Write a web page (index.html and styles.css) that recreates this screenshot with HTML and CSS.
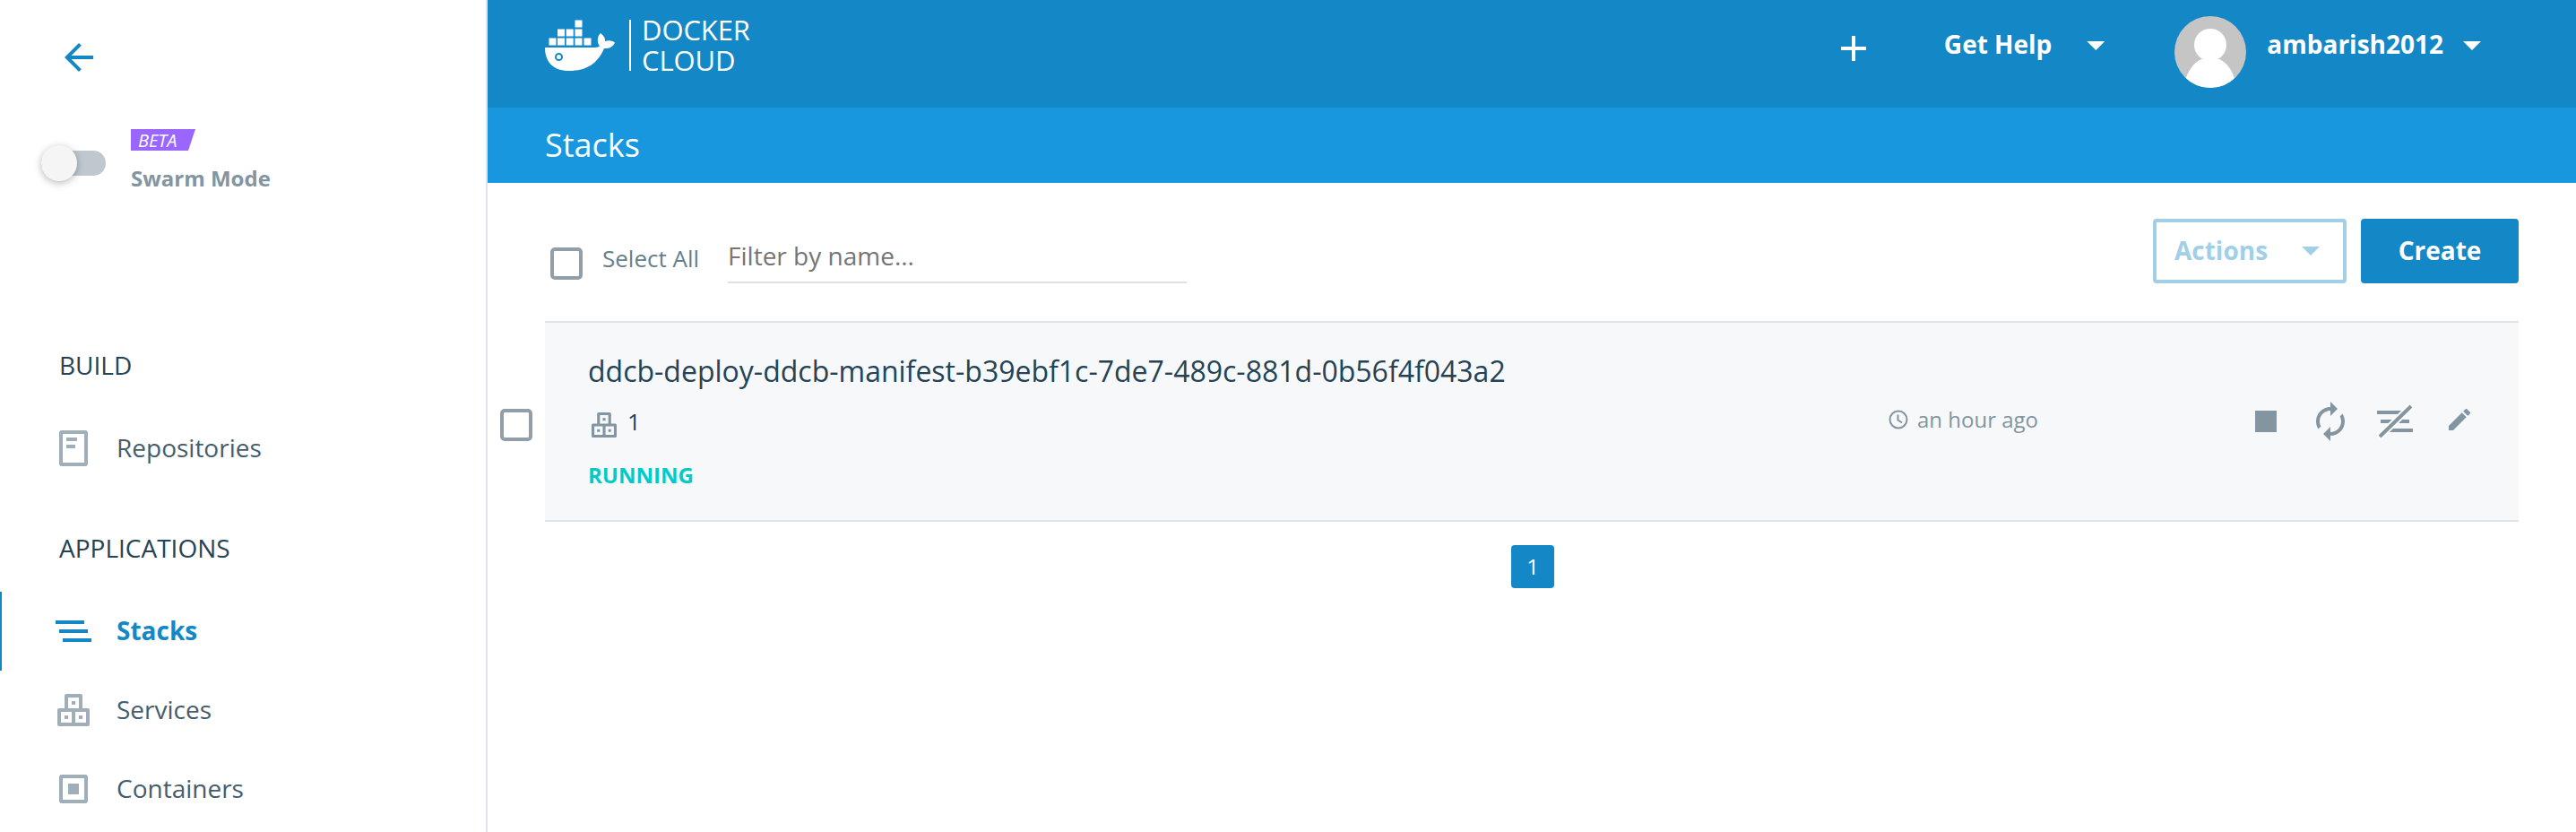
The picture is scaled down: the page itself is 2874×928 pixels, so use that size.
FILE: index.html
```html
<!DOCTYPE html>
<html lang="en">
<head>
<meta charset="utf-8">
<title>Docker Cloud - Stacks</title>
<link rel="stylesheet" href="styles.css">
</head>
<body>
<svg class="defs" width="0" height="0">
  <symbol id="cubes" viewBox="0 0 36 36">
    <path fill-rule="evenodd" d="M8 16V2a2 2 0 0 1 2-2h16a2 2 0 0 1 2 2v14h6a2 2 0 0 1 2 2v16a2 2 0 0 1-2 2H2a2 2 0 0 1-2-2V18a2 2 0 0 1 2-2zM12 4v12h12V4zM4 20v12h12V20zM20 20v12h12V20zM16 8h4v4h-4zM8 24h4v4H8zM24 24h4v4h-4z"/>
  </symbol>
</svg>
<div class="app">
  <aside class="sidebar">
    <a class="back"><svg width="48" height="48" viewBox="0 0 24 24"><path d="M20 11H7.83l5.59-5.59L12 4l-8 8 8 8 1.41-1.41L7.83 13H20z"/></svg></a>
    <div class="swarm">
      <div class="toggle"><span class="knob"></span></div>
      <div class="swarm-label">
        <span class="beta">BETA</span>
        <span class="swarm-name">Swarm Mode</span>
      </div>
    </div>
    <nav class="nav">
      <h2 class="nav-title">BUILD</h2>
      <a class="nav-item"><svg width="40" height="40" viewBox="0 0 40 40"><path fill-rule="evenodd" d="M7 0h26a3 3 0 0 1 3 3v34a3 3 0 0 1-3 3H7a3 3 0 0 1-3-3V3a3 3 0 0 1 3-3zM8 4v32h24V4zM12 8h12v4H12zM12 16h10v4H12z"/></svg><span class="nav-text">Repositories</span></a>
      <h2 class="nav-title nav-title-apps">APPLICATIONS</h2>
      <a class="nav-item active"><svg width="40" height="40" viewBox="0 0 40 40"><path d="M0 8h32v4H0zM4 18h32v4H4zM8 28h32v4H8z"/></svg><span class="nav-text">Stacks</span></a>
      <a class="nav-item"><svg width="40" height="36" viewBox="0 0 36 36"><use href="#cubes"/></svg><span class="nav-text">Services</span></a>
      <a class="nav-item"><svg width="40" height="40" viewBox="0 0 40 40"><path fill-rule="evenodd" d="M7 4h26a3 3 0 0 1 3 3v26a3 3 0 0 1-3 3H7a3 3 0 0 1-3-3V7a3 3 0 0 1 3-3zM8 8v24h24V8zM14 14h12v12H14z"/></svg><span class="nav-text">Containers</span></a>
    </nav>
  </aside>
  <main class="main">
    <header class="topbar">
      <div class="logo">
        <svg width="78" height="58" viewBox="0 0 78 58">
          <path d="M33.500 0.500h8v8h-8zM14 10.500h8v8h-8zM23.700 10.500h8v8h-8zM33.500 10.500h8v8h-8zM4.500 20.500h8v8h-8zM14 20.500h8v8h-8zM23.700 20.500h8v8h-8zM33.500 20.500h8v8h-8zM43.500 20.500h8v8h-8z"/>
          <path d="M0 31H54C57 31 59.500 30.500 61 29.500C58 25 58 19 62 15C66 18 67.500 21 67 24C71 22.500 75 23 78 25.500C76 30.500 71 32.500 66 32C59 49 46 57 27 57C9 57 0 47 0 31Z"/>
          <circle class="whale-eye" cx="15.500" cy="41.500" r="3.500"/>
        </svg>
        <span class="logo-line"></span>
        <span class="logo-text">DOCKER<br>CLOUD</span>
      </div>
      <div class="top-actions">
        <svg class="plus" width="28" height="28" viewBox="0 0 28 28"><path d="M12 0h4v12h12v4H16v12h-4V16H0v-4h12z"/></svg>
        <span class="help">Get Help</span>
        <span class="caret"></span>
        <svg class="avatar" width="80" height="80" viewBox="0 0 80 80">
          <clipPath id="round"><circle cx="40" cy="40" r="40"/></clipPath>
          <g clip-path="url(#round)"><rect class="avatar-bg" width="80" height="80"/><ellipse cx="40" cy="32" rx="18" ry="18"/><path d="M30 48H50C59 52 65 61 67.500 72L60 80H20L12 72C15 61 21 52 30 48Z"/></g>
        </svg>
        <span class="user">ambarish2012</span>
        <span class="caret caret-user"></span>
      </div>
    </header>
    <div class="subbar"><h1 class="page-title">Stacks</h1></div>
    <section class="content">
      <div class="toolbar">
        <span class="checkbox"></span>
        <span class="select-all">Select All</span>
        <div class="filter">Filter by name...</div>
        <div class="btn btn-outline"><span class="btn-text">Actions</span><span class="caret"></span></div>
        <div class="btn btn-primary"><span class="btn-text">Create</span></div>
      </div>
      <div class="stack-row">
        <span class="checkbox"></span>
        <article class="card">
          <div class="info">
            <div class="stack-name">ddcb-deploy-ddcb-manifest-b39ebf1c-7de7-489c-881d-0b56f4f043a2</div>
            <div class="count"><svg width="28" height="28" viewBox="0 0 36 36"><use href="#cubes"/></svg><span class="count-num">1</span></div>
            <div class="status">RUNNING</div>
          </div>
          <div class="time"><svg width="22" height="22" viewBox="0 0 22 22"><circle cx="11" cy="11" r="9.500"/><path d="M10.500 5.500v6l4.500 3"/></svg><span class="ago">an hour ago</span></div>
          <div class="tools">
            <svg width="24" height="24" viewBox="0 0 24 24"><path d="M0 0h24v24H0z"/></svg>
            <svg class="tool-redeploy" width="32" height="44" viewBox="4 1 16 22"><path d="M12 6v3l4-4-4-4v3c-4.420 0-8 3.580-8 8 0 1.570.46 3.030 1.240 4.260L6.700 14.800c-.45-.83-.7-1.790-.7-2.800 0-3.310 2.690-6 6-6zm6.760 1.740L17.300 9.200c.44.840.7 1.790.7 2.800 0 3.310-2.690 6-6 6v-3l-4 4 4 4v-3c4.420 0 8-3.580 8-8 0-1.570-.46-3.030-1.240-4.260z"/></svg>
            <svg class="tool-stack" width="42" height="40" viewBox="0 0 42 40"><path d="M0 8h32v4H0zM4 18h32v4H4zM8 28h32v4H8z"/><path class="slash-gap" d="M2 38L39 2"/><path class="slash" d="M3 37L38 3"/></svg>
            <svg class="tool-edit" width="24" height="24" viewBox="3 3 18 18"><path d="M3 17.250V21h3.750L17.810 9.940l-3.750-3.750zM20.710 7.040a1 1 0 0 0 0-1.410l-2.340-2.340a1 1 0 0 0-1.410 0l-1.830 1.830 3.750 3.750z"/></svg>
          </div>
        </article>
      </div>
      <div class="pager"><span class="page">1</span></div>
    </section>
  </main>
</div>
</body>
</html>
```

FILE: styles.css
```css
* { box-sizing: border-box; }
body { margin: 0; background: #fff; color: #254356; font-family: "Open Sans", "Noto Sans", sans-serif; }
h1, h2 { margin: 0; font-weight: 400; }
svg { display: block; flex: none; fill: currentColor; }
span { white-space: nowrap; }
.defs { position: absolute; }
.app { display: flex; width: 2874px; height: 928px; overflow: hidden; }

.sidebar { flex: none; width: 544px; border-right: 2px solid #dfe3e8; }
.back { display: block; width: 48px; margin: 40px 0 0 64px; color: #1488c6; }
.swarm { display: flex; margin: 56px 0 0 46px; }
.toggle { width: 72px; height: 28px; margin: 24px 28px 0 0; border-radius: 14px; background: #bfc8ce; }
.knob { display: block; width: 40px; height: 40px; margin-top: -6px; border-radius: 50%; background: #f5f5f5; box-shadow: 0 2px 8px rgba(0, 0, 0, .28); }
.swarm-label { display: flex; flex-direction: column; align-items: flex-start; }
.beta { width: 72px; height: 24px; padding-left: 8px; background: #9a66ff; clip-path: polygon(0 0, 100% 0, 64px 100%, 0 100%); color: #fff; font-size: 20px; font-style: italic; line-height: 26px; }
.swarm-name { margin-top: 15px; color: #8295a0; font-size: 24px; font-weight: 700; line-height: 32px; }

.nav { margin-top: 173px; }
.nav-title { margin-bottom: 30px; padding-left: 66px; font-size: 28px; line-height: 38px; }
.nav-title-apps { margin-top: 48px; }
.nav-item { display: flex; align-items: center; gap: 28px; height: 88px; padding-left: 60px; border-left: 2px solid transparent; color: #a0afb7; font-size: 28px; line-height: 38px; }
.nav-text { padding-bottom: 2px; color: #445d6e; }
.active { border-left-color: #1488c6; color: #1488c6; font-weight: 700; }
.active .nav-text { color: #1488c6; }

.main { flex: 1; min-width: 0; }
.topbar { display: flex; justify-content: space-between; height: 120px; padding: 0 106px 0 64px; background: #1488c6; color: #fff; }
.logo { display: flex; align-items: flex-start; padding-top: 22px; }
.logo-line { width: 2px; height: 57px; margin: 0 12px 0 16px; background: #fff; }
.logo-text { margin-top: -6px; font-size: 31px; line-height: 34px; letter-spacing: -.1px; }
.whale-eye { fill: none; stroke: #1488c6; stroke-width: 2; }
.top-actions { display: flex; align-items: flex-start; font-size: 28px; font-weight: 700; line-height: 38px; }
.plus { margin: 40px 87px 0 0; }
.help { margin: 30px 39px 0 0; }
.caret { flex: none; width: 20px; height: 10px; background: currentColor; clip-path: polygon(0 0, 100% 0, 50% 100%); }
.top-actions .caret { margin-top: 46px; }
.avatar { margin: 18px 23px 0 78px; }
.avatar-bg { fill: #c5c5c5; }
.user { margin: 30px 22px 0 0; }
.subbar { display: flex; align-items: center; height: 84px; padding-left: 64px; background: #1897df; color: #fff; }
.page-title { font-size: 36px; line-height: 48px; }

.content { padding: 40px 64px 0 14px; }
.toolbar { display: flex; align-items: flex-start; height: 72px; padding-left: 56px; }
.checkbox { flex: none; width: 36px; height: 36px; border: 4px solid #929fa9; border-radius: 5px; background: #fff; }
.toolbar .checkbox { margin-top: 32px; }
.select-all { margin: 26px 32px 0 22px; color: #667f8c; font-size: 26px; line-height: 36px; }
.filter { width: 512px; height: 50px; margin: 22px auto 0 0; border-bottom: 2px solid #e0e0e0; color: #757575; font-size: 28px; line-height: 38px; }
.btn { display: flex; align-items: center; height: 72px; border-radius: 4px; font-size: 28px; font-weight: 700; line-height: 38px; }
.btn-text { padding-bottom: 2px; }
.btn-outline { justify-content: space-between; width: 216px; margin-right: 16px; padding: 0 26px 0 20px; border: 4px solid #a1cfe8; color: #a1cfe8; }
.btn-primary { justify-content: center; width: 176px; background: #1488c6; color: #fff; }
.stack-row { display: flex; align-items: flex-start; gap: 14px; margin-top: 42px; }
.stack-row > .checkbox { margin-top: 98px; }
.card { display: flex; flex: 1; height: 224px; padding-left: 48px; border-top: 2px solid #dfe3e7; border-bottom: 2px solid #dfe3e7; background: #f7f8fa; color: #8295a0; }
.info { width: 1451px; padding-top: 32px; }
.stack-name { color: #254356; font-size: 32px; line-height: 44px; }
.count { display: flex; align-items: flex-start; height: 36px; margin: 16px 0 0 4px; color: #8295a0; }
.count svg { margin-top: 8px; }
.count-num { margin-left: 12px; color: #254356; font-size: 26px; line-height: 36px; }
.status { margin-top: 26px; color: #00cbca; font-size: 24px; font-weight: 700; line-height: 32px; }
.time { display: flex; align-items: flex-start; gap: 10px; width: 409px; padding-top: 92px; font-size: 24px; line-height: 32px; }
.time svg { margin-top: 5px; fill: none; stroke: currentColor; stroke-width: 2; }
.tools { display: flex; align-items: center; height: 44px; margin-top: 88px; }
.tool-redeploy { margin-left: 44px; }
.tool-stack { margin-left: 36px; }
.tool-edit { margin: 0 0 4px 38px; }
.slash { fill: none; stroke: currentColor; stroke-width: 4; }
.slash-gap { fill: none; stroke: #fff; stroke-width: 8; }
.pager { display: flex; margin: 26px 0 0 1128px; }
.page { width: 48px; height: 48px; border-radius: 4px; background: #1488c6; color: #fff; font-size: 24px; line-height: 47px; text-align: center; }
```
